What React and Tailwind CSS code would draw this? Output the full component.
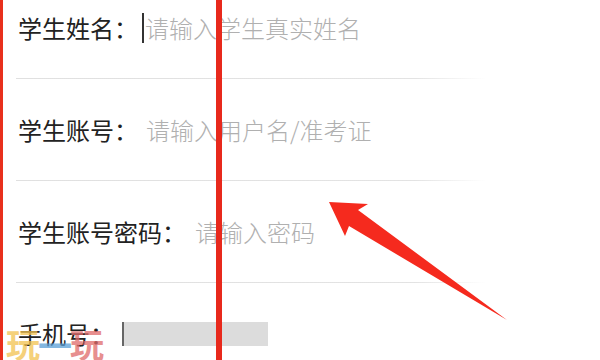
import React from "react";

const font = { fontFamily: '"Noto Sans CJK SC", "Noto Sans", sans-serif' };

function Row({ label, children, last }) {
  return (
    <div className="flex flex-col h-[102px] shrink-0">
      <div className="flex flex-1 items-center pl-[18px]">
        <span className="text-[24px] leading-none text-[#222222] whitespace-nowrap">{label}</span>
        <div className="flex items-center ml-[6px]">{children}</div>
      </div>
      {!last && (
        <div className="ml-[16px] w-[470px] h-px bg-gradient-to-r from-[#e0e0e0] via-[#e3e3e3] via-85% to-transparent" />
      )}
    </div>
  );
}

export default function App() {
  return (
    <div className="relative w-[600px] h-[360px] overflow-hidden bg-white" style={font}>
      <div className="flex flex-col mt-[-23px]">
        <Row label="学生姓名：">
          <span className="w-[2px] h-[30px] bg-[#333333] mr-[1px] -ml-[2px]" />
          <span className="text-[24px] leading-none font-light text-[#b0b0b0] whitespace-nowrap">请输入学生真实姓名</span>
        </Row>
        <Row label="学生账号：">
          <span className="ml-[2px] text-[24px] leading-none font-light text-[#b0b0b0] whitespace-nowrap">请输入用户名/准考证</span>
        </Row>
        <Row label="学生账号密码：">
          <span className="ml-[3px] text-[24px] leading-none font-light text-[#b0b0b0] whitespace-nowrap">请输入密码</span>
        </Row>
        <Row label="手机号：" last>
          <span className="ml-[2px] w-[146px] h-[24px] bg-[#dcdcdc] border-l-2 border-[#666666]" />
        </Row>
      </div>

      <div className="absolute left-0 top-0 w-[3px] h-full bg-[#e8301c]" />
      <div className="absolute left-[216px] top-0 w-[6px] h-full bg-[#e8291c]" />

      <svg className="absolute left-0 top-0" width="600" height="360" viewBox="0 0 600 360">
        <polygon
          points="329,202 368,204 358,210 507,320 349,226 345,236"
          fill="#f52a1e"
        />
      </svg>

      <div className="absolute left-[6px] top-[326px] flex items-center text-[34px] leading-none font-bold opacity-75">
        <span className="text-[#f2c24f]">玩</span>
        <span className="text-[#5a9fd6] -mx-[2px] mt-[2px]">一</span>
        <span className="text-[#e06a6a]">玩</span>
      </div>
    </div>
  );
}
